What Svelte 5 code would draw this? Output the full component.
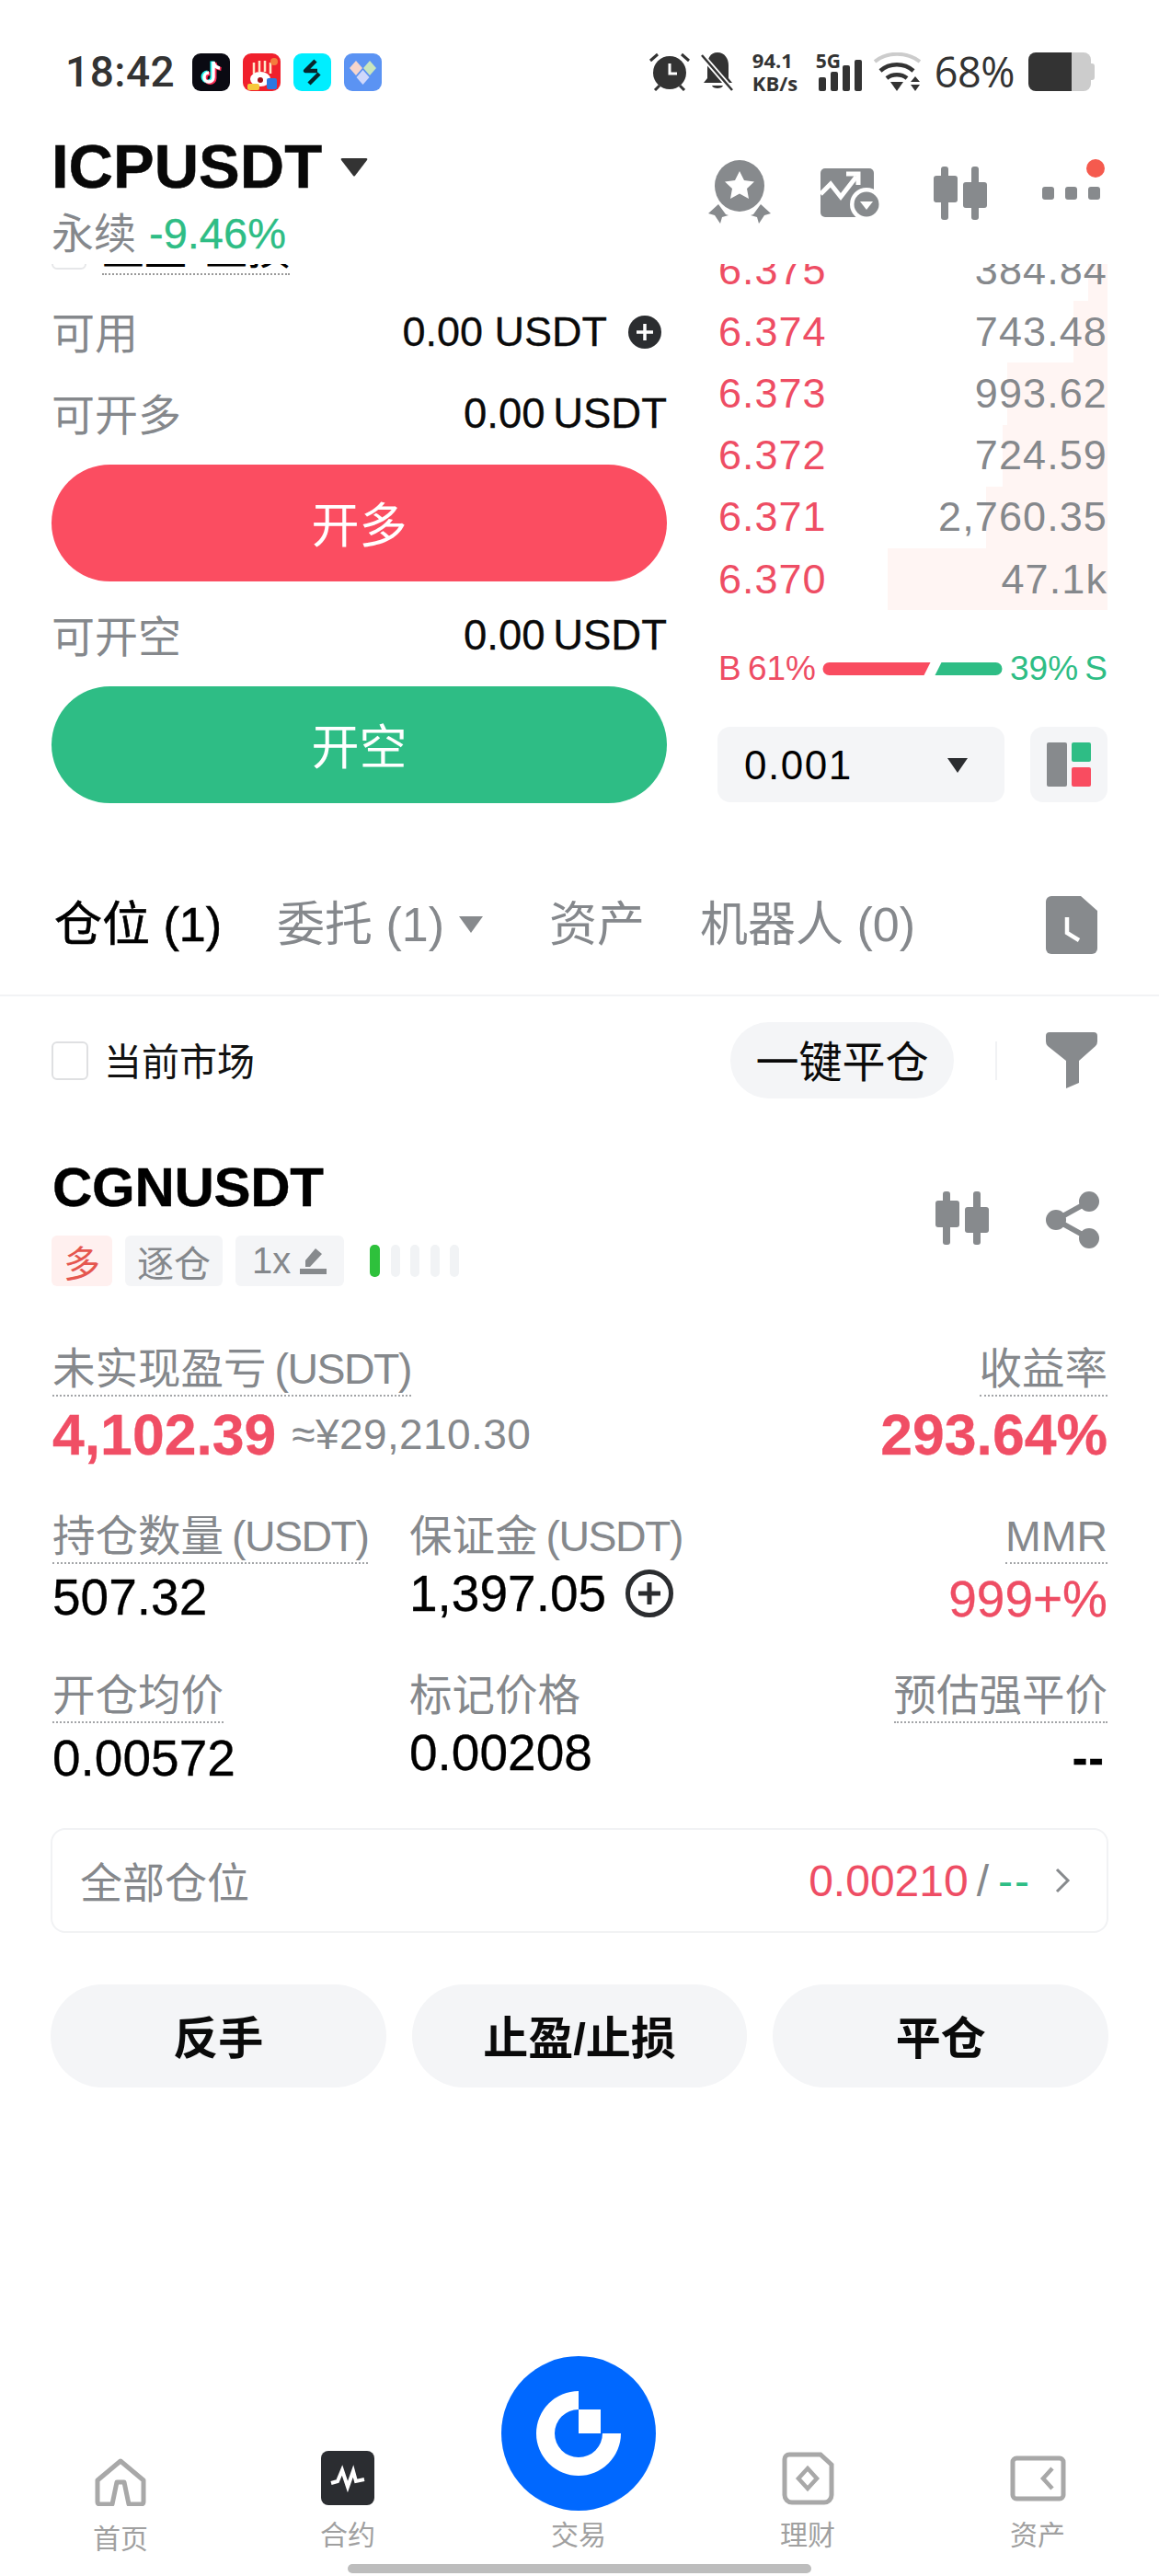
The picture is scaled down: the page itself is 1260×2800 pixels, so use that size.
<script>
  const book = [
    { p: '6.375', q: '384.84', w: 21 },
    { p: '6.374', q: '743.48', w: 37 },
    { p: '6.373', q: '993.62', w: 109 },
    { p: '6.372', q: '724.59', w: 114 },
    { p: '6.371', q: '2,760.35', w: 132 },
    { p: '6.370', q: '47.1k', w: 239 }
  ];
</script>

<div class="page">
  <div class="status">
    <span class="time">18:42</span>
    <div class="apps">
      <svg class="app" viewBox="0 0 41 41"><rect width="41" height="41" rx="9" fill="#0a0a12"/><path d="M23 9v17a5 5 0 1 1-5-5M23 9c.5 4 3 6.500 7 7" fill="none" stroke="#25f4ee" stroke-width="4" transform="translate(-1.500 -.5)"/><path d="M23 9v17a5 5 0 1 1-5-5M23 9c.5 4 3 6.500 7 7" fill="none" stroke="#fe2c55" stroke-width="4" transform="translate(1.500 1)"/><path d="M23 9v17a5 5 0 1 1-5-5M23 9c.5 4 3 6.500 7 7" fill="none" stroke="#fff" stroke-width="3.400"/></svg>
      <svg class="app" viewBox="0 0 41 41"><rect width="41" height="41" rx="9" fill="#f0202c"/><path d="M12 10v12M18 8v12M24 8v12M30 10v12" stroke="#ffe7c9" stroke-width="2.500"/><circle cx="34" cy="9" r="4" fill="#f47c3c"/><ellipse cx="19" cy="28" rx="11" ry="8" fill="#fff"/><circle cx="19" cy="29" r="3" fill="#a01018"/><rect x="26" y="27" width="11" height="12" rx="2" fill="#2d78e0"/><rect x="5" y="33" width="13" height="7" rx="2" fill="#f6c93c"/></svg>
      <svg class="app" viewBox="0 0 41 41"><rect width="41" height="41" rx="9" fill="#00eeff"/><path d="M24 8l-11 11h13M17 33l11-11" fill="none" stroke="#07262c" stroke-width="4.500" stroke-linejoin="round"/></svg>
      <svg class="app" viewBox="0 0 41 41"><rect width="41" height="41" rx="9" fill="#5b93f3"/><path d="M13 8l7 8-7 8-7-8z" fill="#f6d5cc"/><path d="M28 8l7 8-7 8-7-8z" fill="#c9e6bd"/><path d="M20.500 18l7 8-7 8-7-8z" fill="#cfd8fb"/></svg>
    </div>
    <div class="sys">
      <svg class="i-alarm" viewBox="0 0 44 42"><circle cx="22" cy="22" r="18" fill="#333"/><path d="M22 12v11h8" fill="none" stroke="#fff" stroke-width="3"/><path d="M1 9l8-7M43 9l-8-7M6 41l5-5M38 41l-5-5" stroke="#333" stroke-width="3"/></svg>
      <svg class="i-bell" viewBox="0 0 36 42"><path d="M18 0c8 0 12 7 12 14v14l4 5H3l4-5V14C7 7 10 0 18 0z" fill="#333"/><path d="M12 36h12c-1 4-11 4-12 0z" fill="#333"/><path d="M1 3l33 38" stroke="#fff" stroke-width="6"/><path d="M1 3l33 38" stroke="#333" stroke-width="2.500"/></svg>
      <div class="speed"><span>94.1</span><span>KB/s</span></div>
      <div class="net">
        <span class="g5">5G</span>
        <svg class="i-sig" viewBox="0 0 47 34"><rect x="0" y="19" width="8" height="15" rx="2" fill="#333"/><rect x="13" y="13" width="8" height="21" rx="2" fill="#333"/><rect x="26" y="6" width="8" height="28" rx="2" fill="#333"/><rect x="39" y="0" width="8" height="34" rx="2" fill="#333"/></svg>
      </div>
      <svg class="i-wifi" viewBox="0 0 51 42"><path d="M1 10C14 -1 36 -1 50 10" fill="none" stroke="#ccc" stroke-width="4"/><path d="M7 20C17 11 33 11 43 20" fill="none" stroke="#333" stroke-width="4.500"/><path d="M14 28c6-5 16-5 22 0" fill="none" stroke="#333" stroke-width="4.500"/><path d="M18 32h14l-7 10z" fill="#333"/><path d="M45 26l5 6H40zM40 35h10l-5 7z" fill="#333"/></svg>
      <span class="pct">68%</span>
      <div class="batt"><div class="batt-fill"></div><div class="batt-rest"></div><div class="batt-nub"></div></div>
    </div>
  </div>

  <div class="head">
    <div class="head-l">
      <div class="sym"><span>ICPUSDT</span><svg class="tri" viewBox="0 0 30 20"><path d="M2 0h26q2 0 1 2L16 19q-1 1-2 0L1 2Q0 0 2 0z" fill="#333"/></svg></div>
      <div class="sub"><span class="gray">永续</span><span class="chg">-9.46%</span></div>
    </div>
    <div class="head-r">
      <svg class="i-medal" viewBox="0 0 68 69"><ellipse cx="34" cy="28" rx="27" ry="28" fill="#878a8d"/><path d="M34 12l5 10 11 1.500-8 7.500 2 11-10-5.500L24 42l2-11-8-7.500L29 22z" fill="#fff"/><path d="M11 48l8 11 3 1-7 2-2 7-6-9-7-2z" fill="#878a8d"/><path d="M57 48l-8 11-3 1 7 2 2 7 6-9 7-2z" fill="#878a8d"/></svg>
      <svg class="i-chart" viewBox="0 0 64 53"><rect x="0" y="0" width="58" height="53" rx="5" fill="#878a8d"/><path d="M0 28l11-11 11 14 17-22" fill="none" stroke="#fff" stroke-width="5"/><path d="M28 6h13v12" fill="none" stroke="#fff" stroke-width="5"/><circle cx="50" cy="39" r="18" fill="#fff"/><circle cx="50" cy="39" r="13.500" fill="#878a8d"/><path d="M43 36h14l-7 9z" fill="#fff"/></svg>
      <svg class="i-candle" viewBox="0 0 58 58"><rect x="8" y="0" width="8" height="58" rx="3" fill="#878a8d"/><rect x="0" y="10" width="26" height="29" rx="3" fill="#878a8d"/><rect x="41" y="0" width="8" height="58" rx="3" fill="#878a8d"/><rect x="32" y="17" width="26" height="28" rx="3" fill="#878a8d"/></svg>
      <div class="more">
        <span class="dot"></span><span class="dot"></span><span class="dot"></span>
        <span class="badge"></span>
      </div>
    </div>
  </div>

  <div class="trade">
    <div class="left">
      <div class="clip">
        <div class="clip-in">
          <span class="cb"></span>
          <span class="clip-text">止盈 / 止损</span>
        </div>
      </div>
      <div class="row r-first"><span class="gray">可用</span><span class="val">0.00 USDT<svg class="plus" viewBox="0 0 36 36"><circle cx="18" cy="18" r="18" fill="#2b2d30"/><path d="M18 9v18M9 18h18" stroke="#fff" stroke-width="3.500"/></svg></span></div>
      <div class="row r-next"><span class="gray">可开多</span><span class="val tight">0.00 USDT</span></div>
      <div class="btn long">开多</div>
      <div class="row r-next"><span class="gray">可开空</span><span class="val tight">0.00 USDT</span></div>
      <div class="btn short">开空</div>
    </div>
    <div class="right">
      <div class="book-clip">
        <div class="book">
          {#each book as b}
            <div class="b-row">
              <div class="b-bar" style="width:{b.w}px"></div>
              <span class="b-p">{b.p}</span>
              <span class="b-q">{b.q}</span>
            </div>
          {/each}
        </div>
      </div>
      <div class="ratio">
        <span class="r-b">B 61%</span>
        <svg class="r-bar" viewBox="0 0 195 14"><path d="M7 0H117L110 14H7A7 7 0 0 1 7 0z" fill="#f94c60"/><path d="M129 0H188A7 7 0 0 1 188 14H122z" fill="#2ebd85"/></svg>
        <span class="r-s">39% S</span>
      </div>
      <div class="controls">
        <div class="sel"><span>0.001</span><svg class="sel-tri" viewBox="0 0 22 16"><path d="M0 0h22L11 16z" fill="#2b2d30"/></svg></div>
        <div class="lay"><svg class="lay-i" viewBox="0 0 48 48"><rect x="0" y="0" width="22" height="48" rx="2" fill="#878a8d"/><rect x="27" y="0" width="21" height="21" rx="2" fill="#2ebd85"/><rect x="27" y="27" width="21" height="21" rx="2" fill="#f94c60"/></svg></div>
      </div>
    </div>
  </div>

  <div class="tabs">
    <span class="tab active">仓位 (1)</span>
    <span class="tab t2">委托 (1)<svg class="tab-tri" viewBox="0 0 26 18"><path d="M0 0h26L13 18z" fill="#878a8d"/></svg></span>
    <span class="tab t3">资产</span>
    <span class="tab t4">机器人 (0)</span>
    <svg class="i-doc" viewBox="0 0 56 63"><path d="M6 0H38L56 16V57a6 6 0 0 1-6 6H6a6 6 0 0 1-6-6V6a6 6 0 0 1 6-6z" fill="#878a8d"/><path d="M23 23v17l13 8" fill="none" stroke="#fff" stroke-width="4.500"/></svg>
  </div>

  <div class="filter">
    <span class="check"></span>
    <span class="market">当前市场</span>
    <span class="pill">一键平仓</span>
    <span class="vline"></span>
    <svg class="i-funnel" viewBox="0 0 56 61"><path d="M4 0H52q4 0 4 4V10q0 3-2 5L36 31V55L22 61V31L2 15Q0 13 0 10V4q0-4 4-4z" fill="#878a8d"/></svg>
  </div>

  <div class="pos">
    <div class="pos-top">
      <div>
        <div class="pos-sym">CGNUSDT</div>
        <div class="tags">
          <span class="tag red">多</span>
          <span class="tag">逐仓</span>
          <span class="tag lev">1x<svg class="i-edit" viewBox="0 0 29 28"><path d="M17 0l7 6L11 20H6V13zM0 22h29v6H0z" fill="#878a8d"/></svg></span>
          <div class="levels"><i class="on"></i><i></i><i></i><i></i><i></i></div>
        </div>
      </div>
      <div class="pos-icons">
        <svg class="i-candle" viewBox="0 0 58 58"><rect x="8" y="0" width="8" height="58" rx="3" fill="#878a8d"/><rect x="0" y="10" width="26" height="29" rx="3" fill="#878a8d"/><rect x="41" y="0" width="8" height="58" rx="3" fill="#878a8d"/><rect x="32" y="17" width="26" height="28" rx="3" fill="#878a8d"/></svg>
        <svg class="i-share" viewBox="0 0 58 62"><path d="M47 11L11 31l36 20" fill="none" stroke="#878a8d" stroke-width="6"/><circle cx="47" cy="11" r="11" fill="#878a8d"/><circle cx="11" cy="31" r="11" fill="#878a8d"/><circle cx="47" cy="51" r="11" fill="#878a8d"/></svg>
      </div>
    </div>

    <div class="pnl">
      <div>
        <span class="lbl dash">未实现盈亏 <span class="usdt">(USDT)</span></span>
        <div class="pnl-v"><span class="big">4,102.39</span><span class="cny">≈¥29,210.30</span></div>
      </div>
      <div class="end">
        <span class="lbl dash">收益率</span>
        <div class="pnl-v"><span class="big">293.64%</span></div>
      </div>
    </div>

    <div class="grid g1">
      <div><span class="lbl dash">持仓数量 <span class="usdt">(USDT)</span></span><div class="v v-low">507.32</div></div>
      <div><span class="lbl plain">保证金 <span class="usdt">(USDT)</span></span><div class="v v-high">1,397.05<svg class="i-add" viewBox="0 0 52 52"><circle cx="26" cy="26" r="23.500" fill="none" stroke="#2b2d30" stroke-width="5"/><path d="M26 14v24M14 26h24" stroke="#2b2d30" stroke-width="5"/></svg></div></div>
      <div class="end"><span class="lbl dash">MMR</span><div class="v v-low2 redt">999+%</div></div>
    </div>

    <div class="grid g2">
      <div><span class="lbl dash">开仓均价</span><div class="v v-low2">0.00572</div></div>
      <div><span class="lbl plain">标记价格</span><div class="v v-high2">0.00208</div></div>
      <div class="end"><span class="lbl dash">预估强平价</span><div class="v v-low2 dashes">--</div></div>
    </div>

    <div class="card">
      <span class="card-l">全部仓位</span>
      <span class="card-r"><span class="redt">0.00210</span><span class="sl">/</span><span class="chg card-d">--</span><svg class="chev" viewBox="0 0 18 30"><path d="M3 3l12 12L3 27" fill="none" stroke="#878a8d" stroke-width="3"/></svg></span>
    </div>

    <div class="actions">
      <div class="act">反手</div>
      <div class="act">止盈/止损</div>
      <div class="act">平仓</div>
    </div>
  </div>

  <div class="nav">
    <div class="nav-i n-home">
      <svg class="ni-home" viewBox="0 0 56 52"><path d="M28 3L53 24V47q0 3-3 3H37L32 26h-8L19 50H6q-3 0-3-3V24z" fill="none" stroke="#a8a8a8" stroke-width="5" stroke-linejoin="round"/></svg>
      <span>首页</span>
    </div>
    <div class="nav-i n-con">
      <svg class="ni-con" viewBox="0 0 58 59"><rect width="58" height="59" rx="8" fill="#2b2d31"/><path d="M11 35l7-2 5-12 6 18 6-17 3 11 9-2" fill="none" stroke="#fff" stroke-width="4"/></svg>
      <span>合约</span>
    </div>
    <div class="nav-i n-trade">
      <svg class="ni-logo" viewBox="0 0 168 168"><circle cx="84" cy="84" r="84" fill="#0068ff"/><path d="M84 38A46 46 0 1 0 130 84H84z" fill="#fff"/><path d="M84 58A26 26 0 1 0 110 84H84z" fill="#0068ff"/><rect x="84" y="58" width="24" height="26" fill="#fff"/></svg>
      <span>交易</span>
    </div>
    <div class="nav-i n-fin">
      <svg class="ni-fin" viewBox="0 0 57 58"><path d="M8 3H42L54 14V47a8 8 0 0 1-8 8H11a8 8 0 0 1-8-8V8a5 5 0 0 1 5-5z" fill="none" stroke="#a8a8a8" stroke-width="5"/><path d="M28 18l10 11-10 11-10-11z" fill="none" stroke="#a8a8a8" stroke-width="4.500"/></svg>
      <span>理财</span>
    </div>
    <div class="nav-i n-ast">
      <svg class="ni-ast" viewBox="0 0 61 50"><rect x="3" y="3" width="55" height="44" rx="4" fill="none" stroke="#a8a8a8" stroke-width="5"/><path d="M46 14l-10 11 10 11" fill="none" stroke="#a8a8a8" stroke-width="4.500"/></svg>
      <span>资产</span>
    </div>
  </div>
  <div class="homebar"></div>
</div>

<style>
  :global(body) { margin: 0; background: #fff; }
  .page {
    width: 1260px; height: 2800px; display: flex; flex-direction: column; overflow: hidden;
    background: #fff; color: #000;
    font-family: "Liberation Sans", "Noto Sans CJK SC", sans-serif;
  }
  .gray { color: #85888c; }
  .chg { color: #2ebd85; }
  .redt { color: #ee4d64; }

  .status { display: flex; align-items: center; height: 42px; padding: 57px 70px 0 71px; }
  .time { font: 500 46px/42px Roboto, sans-serif; color: #333; width: 138px; letter-spacing: .5px; }
  .apps { display: flex; gap: 14px; }
  .app { width: 41px; height: 41px; display: block; }
  .sys { display: flex; align-items: center; margin-left: auto; height: 42px; }
  .i-alarm { width: 44px; height: 42px; }
  .i-bell { width: 36px; height: 42px; margin-left: 12px; }
  .speed { display: flex; flex-direction: column; margin-left: 20px; font: 700 22px/25px "Open Sans", sans-serif; color: #333; width: 50px; }
  .net { position: relative; width: 47px; height: 42px; margin-left: 20px; }
  .g5 { position: absolute; left: -1px; top: -3px; font: 700 21px/24px "Open Sans", sans-serif; color: #333; }
  .i-sig { position: absolute; left: 2px; bottom: 0; width: 47px; height: 34px; }
  .i-wifi { width: 51px; height: 42px; margin-left: 15px; }
  .pct { font: 400 45px/42px "Open Sans", sans-serif; color: #333; margin-left: 15px; letter-spacing: -.5px; }
  .batt { display: flex; align-items: center; margin-left: 15px; height: 42px; }
  .batt-fill { width: 47px; height: 42px; background: #333; border-radius: 8px 0 0 8px; }
  .batt-rest { width: 21px; height: 42px; background: #ccc; border-radius: 0 8px 8px 0; }
  .batt-nub { width: 4px; height: 18px; background: #ccc; border-radius: 0 3px 3px 0; }

  .head { display: flex; justify-content: space-between; height: 188px; padding: 0 64px 0 56px; }
  .head-l { padding-top: 46px; }
  .sym { display: flex; align-items: center; font-size: 67px; font-weight: 700; line-height: 72px; color: #080808; -webkit-text-stroke: .5px #080808; }
  .tri { width: 30px; height: 20px; margin-left: 20px; margin-top: 2px; }
  .sub { display: flex; gap: 14px; font-size: 46px; line-height: 50px; margin-top: 12px; }
  .sub .chg { font-size: 47px; -webkit-text-stroke: .3px #2ebd85; }
  .head-r { display: flex; align-items: flex-start; padding-top: 75px; position: relative; }
  .i-medal { width: 68px; height: 69px; }
  .i-chart { width: 64px; height: 53px; margin: 9px 0 0 54px; }
  .i-candle { width: 58px; height: 58px; }
  .head-r .i-candle { margin: 7px 0 0 59px; }
  .more { position: relative; display: flex; gap: 12px; margin: 29px 0 0 60px; height: 14px; }
  .dot { width: 13px; height: 14px; background: #878a8d; border-radius: 3px; }
  .badge { position: absolute; right: -5px; top: -30px; width: 20px; height: 20px; border-radius: 50%; background: #f55a4e; }

  .trade { display: grid; grid-template-columns: 669px 424px; gap: 55px; padding-left: 56px; height: 593px; overflow: hidden; }
  .clip { height: 12px; overflow: hidden; display: flex; align-items: flex-end; }
  .clip-in { display: flex; align-items: flex-end; gap: 17px; }
  .cb { width: 38px; height: 40px; border: 2px solid #e6e7e9; border-radius: 6px; box-sizing: border-box; display: block; margin-bottom: 6px; }
  .clip-text { font-size: 46px; line-height: 50px; border-bottom: 2px dotted #999; padding-bottom: 1px; word-spacing: -9px; white-space: nowrap; }
  .row { display: flex; justify-content: space-between; align-items: center; height: 60px; font-size: 46px; }
  .row .gray { margin-bottom: 6px; font-size: 47px; }
  .r-first { margin-top: 32px; }
  .r-next { margin-top: 29px; }
  .val { display: flex; align-items: center; gap: 23px; font-size: 45px; color: #0a0a0a; -webkit-text-stroke: .3px #0a0a0a; }
  .tight { font-size: 45.500px; word-spacing: -4px; }
  .plus { width: 36px; height: 36px; margin-right: 6px; }
  .btn { height: 127px; margin-top: 25px; border-radius: 64px; color: #fff; font-size: 52px; display: flex; align-items: center; justify-content: center; padding-bottom: 3px; box-sizing: border-box; }
  .long { background: #fb4d61; }
  .short { background: #2ebd85; }

  .book-clip { height: 376px; overflow: hidden; }
  .book { margin-top: -27px; }
  .b-row { position: relative; height: 67.200px; display: flex; justify-content: space-between; align-items: center; padding: 0 1px 0 1px; font-size: 45px; letter-spacing: 1px; }
  .b-bar { position: absolute; right: 0; top: 0; bottom: 0; background: #fff5f3; }
  .b-p { position: relative; color: #ee4d64; }
  .b-q { position: relative; color: #85888c; letter-spacing: 1.100px; margin-right: -1px; }
  .ratio { display: flex; align-items: center; height: 40px; margin-top: 44px; padding-left: 1px; font-size: 37px; }
  .r-b { color: #ee4d64; width: 113px; white-space: nowrap; word-spacing: -3px; }
  .r-s { color: #2ebd85; margin-left: 8px; white-space: nowrap; word-spacing: -3px; }
  .r-bar { width: 196px; height: 14px; }
  .controls { display: flex; justify-content: space-between; margin-top: 43px; }
  .sel { width: 312px; height: 82px; border-radius: 14px; background: #f4f5f7; display: flex; align-items: center; justify-content: space-between; padding: 2px 40px 0 29px; box-sizing: border-box; font-size: 44px; letter-spacing: 1.500px; }
  .sel-tri { width: 22px; height: 16px; }
  .lay { width: 84px; height: 82px; border-radius: 14px; background: #f4f5f7; display: flex; align-items: center; justify-content: center; }
  .lay-i { width: 48px; height: 48px; }

  .tabs { display: flex; align-items: center; padding: 93px 67px 44px 59px; border-bottom: 2px solid #f2f3f5; height: 64px; }
  .tab { font-size: 52px; line-height: 64px; color: #85888c; white-space: nowrap; display: flex; align-items: center; }
  .active { color: #000; -webkit-text-stroke: .6px #000; }
  .t2 { margin-left: 60px; }
  .tab-tri { width: 26px; height: 18px; margin-left: 16px; }
  .t3 { margin-left: 72px; }
  .t4 { margin-left: 60px; }
  .i-doc { width: 56px; height: 63px; margin-left: auto; }

  .filter { display: flex; align-items: center; height: 83px; padding: 28px 67px 0 56px; }
  .check { width: 40px; height: 42px; border: 2px solid #dfe0e2; border-radius: 6px; box-sizing: border-box; }
  .market { font-size: 41px; margin-left: 17px; color: #111; padding-bottom: 4px; }
  .pill { margin-left: auto; width: 243px; height: 83px; border-radius: 42px; background: #f4f5f7; font-size: 47px; display: flex; align-items: center; justify-content: center; color: #0a0a0a; padding-bottom: 4px; box-sizing: border-box; }
  .vline { width: 2px; height: 42px; background: #f1f2f4; margin-left: 45px; }
  .i-funnel { width: 56px; height: 61px; margin-left: 53px; }

  .pos { padding: 67px 55px 0; }
  .pos-top { display: flex; justify-content: space-between; padding: 0 10px 0 2px; }
  .pos-sym { font-size: 60px; font-weight: 700; line-height: 60px; letter-spacing: -.3px; -webkit-text-stroke: .4px #000; }
  .tags { display: flex; align-items: center; margin-top: 22px; margin-left: -1px; }
  .tag { height: 55px; padding: 0 13px; border-radius: 6px; background: #f4f5f7; color: #85888c; font-size: 40px; display: flex; align-items: center; margin-right: 14px; }
  .red { background: #fff0ef; color: #e5574f; }
  .lev { gap: 10px; padding: 0 19px 0 18px; }
  .i-edit { width: 29px; height: 28px; }
  .levels { display: flex; gap: 11.500px; margin-left: 14px; }
  .levels i { width: 10px; height: 35px; border-radius: 5px; background: #f1f3f5; display: block; }
  .levels i.on { width: 11px; background: #2ec13c; }
  .pos-icons { display: flex; gap: 62px; padding-top: 34px; }
  .i-share { width: 58px; height: 62px; }

  .pnl { display: flex; justify-content: space-between; margin-top: 70px; padding: 0 1px 0 2px; }
  .end { display: flex; flex-direction: column; align-items: flex-end; }
  .lbl { display: inline-block; font-size: 46.500px; line-height: 40px; height: 48px; color: #85888c; white-space: nowrap; border-bottom: 2px dotted transparent; }
  .usdt { letter-spacing: -1.500px; margin-left: -4px; }
  .dash { border-bottom-color: #a3a5a8; }
  .pnl-v { display: flex; align-items: center; height: 62px; margin-top: 10px; }
  .big { font-size: 62.500px; font-weight: 700; color: #f04e65; -webkit-text-stroke: .3px #f04e65; }
  .cny { font-size: 46px; color: #85888c; margin-left: 17px; letter-spacing: .4px; }

  .grid { display: grid; grid-template-columns: 388px 1fr auto; padding: 0 1px 0 2px; }
  .g1 { margin-top: 60px; }
  .g2 { margin-top: 58px; }
  .v { font-size: 55px; line-height: 54px; display: flex; align-items: center; color: #000; -webkit-text-stroke: .3px #000; }
  .v-low { margin-top: 9px; }
  .v-high { margin-top: 5px; }
  .v-high2 { margin-top: 5px; }
  .v-low2 { margin-top: 11px; }
  .g1 .redt { color: #ee4d64; -webkit-text-stroke: .3px #ee4d64; }
  .i-add { width: 52px; height: 52px; margin-left: 21px; }
  .dashes { font-weight: 700; font-size: 50px; padding-right: 3px; letter-spacing: 1px; }

  .card { display: flex; justify-content: space-between; align-items: center; height: 114px; margin-top: 49px; box-sizing: border-box; border: 2px solid #f1f2f4; border-radius: 16px; padding: 0 39px 0 30px; }
  .card-l { font-size: 46px; color: #85888c; padding-bottom: 3px; }
  .card-r { display: flex; align-items: center; font-size: 48px; white-space: nowrap; }
  .sl { color: #85888c; margin-left: 9px; }
  .card-d { margin-left: 10px; letter-spacing: 2px; }
  .chev { width: 18px; height: 30px; margin-left: 25px; }

  .actions { display: grid; grid-template-columns: repeat(3, 1fr); gap: 28px; margin-top: 56px; }
  .act { height: 112px; border-radius: 56px; background: #f4f5f7; font-size: 49px; font-weight: 700; display: flex; align-items: center; justify-content: center; color: #0a0a0a; padding-bottom: 3px; box-sizing: border-box; }

  .nav { display: grid; grid-template-columns: 250px 244px 258px 240px 260px; padding-left: 6px; height: 219px; margin-top: auto; }
  .nav-i { display: flex; flex-direction: column; align-items: center; font-size: 30px; line-height: 40px; color: #a0a0a0; }
  .nav-i svg { display: block; }
  .ni-home { width: 56px; height: 52px; margin-top: 111px; margin-bottom: 16px; }
  .ni-con { width: 58px; height: 59px; margin-top: 103px; margin-bottom: 13px; }
  .ni-logo { width: 168px; height: 168px; margin-bottom: 7px; }
  .ni-fin { width: 57px; height: 58px; margin-top: 104px; margin-bottom: 13px; }
  .ni-ast { width: 61px; height: 50px; margin-top: 108px; margin-bottom: 17px; }
  .homebar { width: 504px; height: 10px; border-radius: 5px; background: #bdbdbd; margin: 7px auto 3px; }
</style>
